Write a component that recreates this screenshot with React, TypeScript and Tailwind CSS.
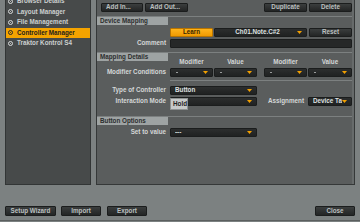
import React from 'react';

const Arrow = () => (
  <svg width="5" height="3" viewBox="0 0 5 3" className="shrink-0">
    <polygon points="0,0 5,0 2.5,3" fill="#f2a000" />
  </svg>
);

const Button = ({ label, className = '', left = false }: { label: string; className?: string; left?: boolean }) => (
  <div
    className={`h-[9px] flex items-center ${left ? 'justify-start pl-[4px]' : 'justify-center'} bg-gradient-to-b from-[#3b3e3e] to-[#232525] border border-[#1b1d1d] rounded-[1px] text-[#bcc0c0] shrink-0 ${className}`}
  >
    {label}
  </div>
);

const Drop = ({ value, className = '', center = false, dot = false }: { value?: string; className?: string; center?: boolean; dot?: boolean }) => (
  <div
    className={`relative h-[9px] flex items-center bg-gradient-to-b from-[#2c2e2e] to-[#202222] border border-[#1b1d1d] rounded-[1px] text-[#dfe1e1] pl-[4px] pr-[4px] shrink-0 ${className}`}
  >
    {dot ? (
      <span className="flex-1 pl-[1px]">
        <span className="block w-[2px] h-[1px] bg-[#9a9d9d]" />
      </span>
    ) : (
      <span className={`flex-1 min-w-0 overflow-hidden whitespace-nowrap pr-[1px] ${center ? 'text-center' : ''}`}>{value}</span>
    )}
    <Arrow />
  </div>
);

const Section = ({ title, className = '' }: { title: string; className?: string }) => (
  <div className={`border-t border-[#7c8080] ${className}`}>
    <div className="w-[71px] h-[8px] bg-[#9ea3a3] text-[#2c2e2e] pl-[3px] flex items-center">{title}</div>
  </div>
);

const Row = ({ label, children, className = '' }: { label?: string; children: React.ReactNode; className?: string }) => (
  <div className={`flex items-center gap-[4px] h-[9px] ${className}`}>
    <div className="w-[69px] text-right text-[#d4d7d7] shrink-0">{label}</div>
    {children}
  </div>
);

const items = ['Browser Details', 'Layout Manager', 'File Management', 'Controller Manager', 'Traktor Kontrol S4'];

export default function App() {
  return (
    <div className="w-[360px] h-[222px] overflow-hidden bg-[#7c8181] font-['Liberation_Sans',Arial,sans-serif] text-[6.3px] font-bold leading-none flex flex-col px-[5px]">
      <div className="h-[185px] flex gap-[5px] shrink-0">
        {/* preferences list */}
        <div className="w-[86px] bg-[#474a4a] border border-t-0 border-[#323535] overflow-hidden">
          <div className="-mt-[4px]">
            {items.map((it) => {
              const sel = it === 'Controller Manager';
              return (
                <div
                  key={it}
                  className={`h-[10.5px] flex items-center pl-[2px] gap-[4px] ${sel ? 'bg-[#f4a300] text-[#1c1c1c]' : 'text-[#ccd0d0]'}`}
                >
                  <span className={`w-[5px] h-[5px] rounded-full border flex items-center justify-center ${sel ? 'border-[#2a2a2a]' : 'border-[#d8dada]'}`}>
                    <span className={`w-[1px] h-[1px] rounded-full ${sel ? 'bg-[#2a2a2a]' : 'bg-[#d8dada]'}`} />
                  </span>
                  {it}
                </div>
              );
            })}
          </div>
        </div>

        {/* controller manager panel */}
        <div className="w-[259px] bg-[#5a5d5d] border border-t-0 border-[#353838] flex">
          <div className="flex-1 flex flex-col pt-[3px]">
            <div className="flex items-center h-[9px] pl-[4px]">
              <Button label="Add In..." left className="w-[42px]" />
              <Button label="Add Out..." left className="w-[43px] ml-[2px]" />
              <Button label="Duplicate" className="w-[43px] ml-auto" />
              <Button label="Delete" className="w-[43px] ml-[2px]" />
            </div>

            <Section title="Device Mapping" className="mt-[4px]" />
            <Row className="mt-[3px]">
              <div className="w-[43px] h-[9px] flex items-center justify-center bg-gradient-to-b from-[#ffb41a] to-[#f09a00] border border-[#b87400] rounded-[1px] text-[#3a2600] shrink-0">
                Learn
              </div>
              <Drop value="Ch01.Note.C#2" center className="w-[93px] -ml-[3px]" />
              <Button label="Reset" className="w-[43px] -ml-[2px]" />
            </Row>
            <Row label="Comment" className="mt-[2px]">
              <div className="w-[182px] h-[9px] bg-[#262828] border border-[#1b1d1d] rounded-[1px]" />
            </Row>

            <Section title="Mapping Details" className="mt-[4px]" />
            <div className="-mt-[2px] h-[7px] flex items-center pl-[73px] text-[#d4d7d7]">
              <div className="w-[43px] text-center">Modifier</div>
              <div className="w-[43px] ml-[1px] text-center">Value</div>
              <div className="w-[43px] ml-[7px] text-center">Modifier</div>
              <div className="w-[44px] ml-[1px] text-center">Value</div>
            </div>
            <Row label="Modifier Conditions" className="mt-[2px]">
              <Drop dot className="w-[43px]" />
              <Drop dot className="w-[43px] -ml-[3px]" />
              <Drop dot className="w-[43px] ml-[3px]" />
              <Drop dot className="w-[44px] -ml-[3px]" />
            </Row>
            <div className="mt-[3px] ml-[73px] h-px bg-[#7c8080]" />

            <Row label="Type of Controller" className="mt-[5px]">
              <Drop value="Button" className="w-[87px]" />
            </Row>
            <Row label="Interaction Mode" className="mt-[2px]">
              <div className="relative w-[87px] shrink-0">
                <Drop value="" className="w-[87px]" />
                <div className="absolute left-0 top-[1px] w-[18px] h-[12px] bg-[#c6c9c9] border border-[#8e9292] text-[#1e2020] flex items-center pl-[2px]">
                  Hold
                </div>
              </div>
              <div className="flex-1 text-right text-[#d4d7d7]">Assignment</div>
              <Drop value="Device Target" className="w-[44px]" />
            </Row>

            <Section title="Button Options" className="mt-[10px]" />
            <Row label="Set to value" className="mt-[3px]">
              <Drop value="---" className="w-[87px]" />
            </Row>
          </div>
          <div className="w-[2px] bg-[#676b6b]" />
        </div>
      </div>

      <div className="mt-[21px] h-[10px] flex items-center shrink-0">
        <Button label="Setup Wizard" className="w-[51px] h-[10px]" />
        <Button label="Import" className="w-[40px] h-[10px] ml-[5px]" />
        <Button label="Export" className="w-[40px] h-[10px] ml-[6px]" />
        <Button label="Close" className="w-[40px] h-[10px] ml-auto" />
      </div>
      <div className="mt-[4px] -mx-[5px] h-px bg-[#5b5f5f] shrink-0" />
    </div>
  );
}
